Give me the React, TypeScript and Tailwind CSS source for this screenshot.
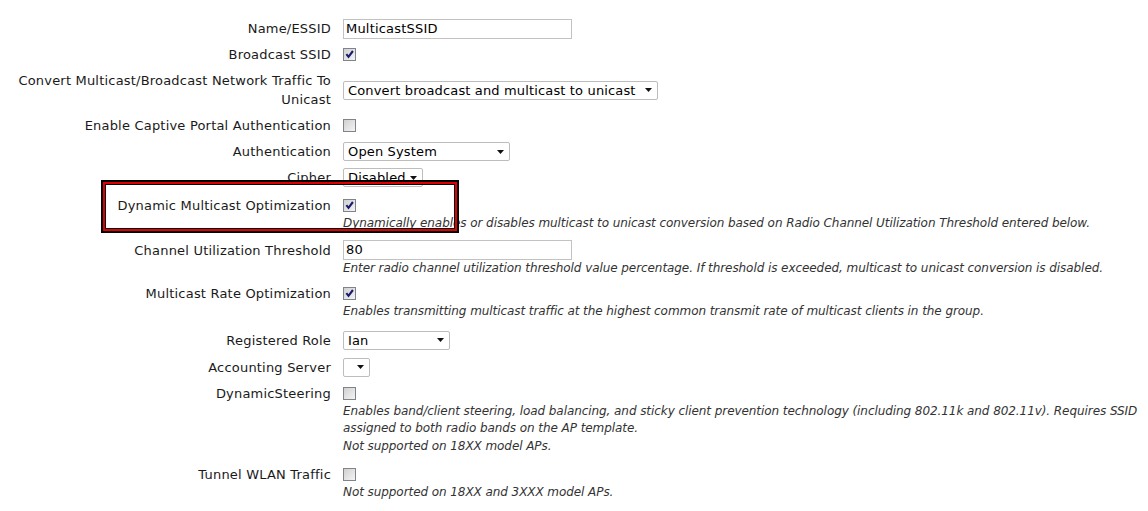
import React from "react";

function Check({ checked }: { checked?: boolean }) {
  return (
    <span className="relative inline-block w-[13px] h-[13px] border border-[#7f848b] bg-gradient-to-br from-[#d0d0d0] to-[#f4f4f4]">
      {checked && (
        <svg viewBox="0 0 11 11" className="absolute left-0 top-0 w-[11px] h-[11px]">
          <path d="M2.4 5.2 L4.5 7.8 L8.9 2" fill="none" stroke="#1a1a6e" strokeWidth="2.1" />
        </svg>
      )}
    </span>
  );
}

function Select({ value, width }: { value: string; width: string }) {
  return (
    <div
      className={`flex items-center justify-between h-[19px] border border-[#bdbdbd] rounded-[2px] bg-white pl-[4px] pr-[5px] text-[13px] tracking-[0.15px] text-black ${width}`}
    >
      <span className="whitespace-nowrap leading-none">{value}</span>
      <svg viewBox="0 0 7 4" className="w-[7px] h-[4px] ml-1 shrink-0">
        <path d="M0 0 H7 L3.5 4 Z" fill="#111" />
      </svg>
    </div>
  );
}

function TextBox({ value }: { value: string }) {
  return (
    <div className="flex items-center h-[20px] w-[229px] border border-[#c2c2c2] bg-white px-[2px] text-[13px] tracking-[0.2px] text-black">
      {value}
    </div>
  );
}

function Row({
  label,
  mt,
  children,
  desc,
}: {
  label: React.ReactNode;
  mt: string;
  children: React.ReactNode;
  desc?: React.ReactNode;
}) {
  return (
    <div className={`flex items-start ${mt}`}>
      <div className="w-[331px] shrink-0 text-right leading-[19px] text-[13px] tracking-[0.2px] text-[#1a1a1a] whitespace-nowrap">
        {label}
      </div>
      <div className="ml-[12px] flex flex-col">
        <div className="h-[19px] flex items-center">{children}</div>
        {desc && (
          <div className="italic text-[12px] tracking-[-0.07px] leading-[17.5px] text-[#333] whitespace-nowrap">
            {desc}
          </div>
        )}
      </div>
    </div>
  );
}

export default function App() {
  return (
    <div
      className="relative w-[1148px] h-[511px] bg-white overflow-hidden pt-[19px]"
      style={{ fontFamily: '"DejaVu Sans", Verdana, sans-serif' }}
    >
      <Row label="Name/ESSID" mt="mt-0">
        <TextBox value="MulticastSSID" />
      </Row>
      <Row label="Broadcast SSID" mt="mt-[7px]">
        <Check checked />
      </Row>
      <div className="flex items-center mt-[7px]">
        <div className="w-[331px] shrink-0 text-right leading-[19px] text-[13px] tracking-[0.2px] text-[#1a1a1a] whitespace-nowrap">
          Convert Multicast/Broadcast Network Traffic To
          <br />
          Unicast
        </div>
        <div className="ml-[12px]">
          <Select value="Convert broadcast and multicast to unicast" width="w-[315px]" />
        </div>
      </div>
      <Row label="Enable Captive Portal Authentication" mt="mt-[7px]">
        <Check />
      </Row>
      <Row label="Authentication" mt="mt-[7px]">
        <Select value="Open System" width="w-[167px]" />
      </Row>
      <Row label="Cipher" mt="mt-[7px]">
        <Select value="Disabled" width="w-[80px]" />
      </Row>
      <Row
        label="Dynamic Multicast Optimization"
        mt="mt-[9px]"
        desc="Dynamically enables or disables multicast to unicast conversion based on Radio Channel Utilization Threshold entered below."
      >
        <Check checked />
      </Row>
      <Row
        label="Channel Utilization Threshold"
        mt="mt-[8px]"
        desc="Enter radio channel utilization threshold value percentage. If threshold is exceeded, multicast to unicast conversion is disabled."
      >
        <TextBox value="80" />
      </Row>
      <Row
        label="Multicast Rate Optimization"
        mt="mt-[7px]"
        desc="Enables transmitting multicast traffic at the highest common transmit rate of multicast clients in the group."
      >
        <Check checked />
      </Row>
      <Row label="Registered Role" mt="mt-[10px]">
        <Select value="Ian" width="w-[107px]" />
      </Row>
      <Row label="Accounting Server" mt="mt-[8px]">
        <Select value="" width="w-[27px]" />
      </Row>
      <Row
        label="DynamicSteering"
        mt="mt-[7px]"
        desc={
          <>
            Enables band/client steering, load balancing, and sticky client prevention technology (including 802.11k and 802.11v). Requires SSID
            <br />
            assigned to both radio bands on the AP template.
            <br />
            Not supported on 18XX model APs.
          </>
        }
      >
        <Check />
      </Row>
      <Row label="Tunnel WLAN Traffic" mt="mt-[10px]" desc="Not supported on 18XX and 3XXX model APs.">
        <Check />
      </Row>

      {/* highlight box drawn over the form */}
      <div className="absolute left-[101px] top-[180px] w-[358px] h-[53px] border-2 border-black">
        <div className="h-full border-2 border-[#e00000]">
          <div className="h-full border border-black" />
        </div>
      </div>
    </div>
  );
}
